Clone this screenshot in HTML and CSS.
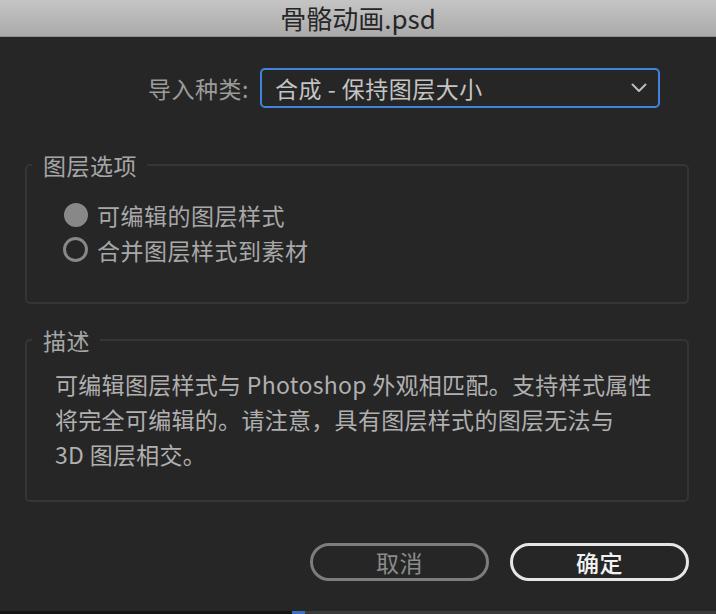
FILE: index.html
```html
<!DOCTYPE html>
<html lang="zh-CN">
<head>
<meta charset="utf-8">
<title>骨骼动画.psd</title>
<link rel="stylesheet" href="styles.css">
</head>
<body>
<div class="window">
  <div class="titlebar">骨骼动画.psd</div>
  <div class="content">
    <div class="import-row">
      <span class="import-label">导入种类:</span>
      <div class="select">
        <span class="select-value">合成 - 保持图层大小</span>
        <svg class="chevron" width="16" height="10" viewBox="0 0 16 10"><path d="M1.5 1.5 L8 8 L14.5 1.5" fill="none" stroke="#bdbdbd" stroke-width="2" stroke-linecap="round" stroke-linejoin="round"/></svg>
      </div>
    </div>

    <fieldset class="group options">
      <legend>图层选项</legend>
      <div class="group-body options-body">
        <div class="radio-row"><span class="radio checked"></span><span class="radio-label">可编辑的图层样式</span></div>
        <div class="radio-row"><span class="radio"></span><span class="radio-label">合并图层样式到素材</span></div>
      </div>
    </fieldset>

    <fieldset class="group desc">
      <legend>描述</legend>
      <div class="group-body desc-body">
        <p class="desc-text">可编辑图层样式与 Photoshop 外观相匹配。支持样式属性<br>将完全可编辑的。请注意，具有图层样式的图层无法与<br>3D 图层相交。</p>
      </div>
    </fieldset>

    <div class="buttons">
      <button class="btn cancel">取消</button>
      <button class="btn ok">确定</button>
    </div>
  </div>
  <div class="bottom-strip"><span class="strip-left"></span><span class="strip-blue"></span><span class="strip-right"></span></div>
</div>
</body>
</html>
```

FILE: styles.css
```css
* { box-sizing: border-box; }
html, body {
  margin: 0;
  padding: 0;
  height: 100%;
  background: #262626;
}
body {
  font-family: "Noto Sans CJK SC", "Noto Sans", sans-serif;
}
.window {
  height: 100vh;
  display: flex;
  flex-direction: column;
  background: #262626;
}
.titlebar {
  height: 37px;
  flex: none;
  background: linear-gradient(#c5c5c5, #aaaaaa);
  border-bottom: 1px solid #8e8e8e;
  color: #262626;
  font-size: 26px;
  line-height: 36px;
  text-align: center;
}
.content {
  padding: 31px 27px 0 25px;
  display: flex;
  flex-direction: column;
}
.import-row {
  display: flex;
  align-items: center;
  justify-content: flex-end;
  gap: 11px;
  padding-right: 29px;
}
.import-label {
  color: #9c9c9c;
  font-size: 23px;
  letter-spacing: 0.5px;
}
.select {
  width: 400px;
  height: 40px;
  border: 2px solid #3f83dc;
  border-radius: 5px;
  display: flex;
  align-items: center;
  justify-content: space-between;
  padding: 0 11px 0 13px;
}
.select-value {
  color: #c4c4c4;
  font-size: 23px;
  letter-spacing: 0.5px;
  line-height: 36px;
}
.chevron { display: block; }

.group {
  margin: 0;
  border: 2px solid #353535;
  border-radius: 5px;
  padding: 0;
  min-width: 0;
}
.group legend {
  margin-left: 5px;
  padding: 0 10px 0 11px;
  color: #a6a6a6;
  font-size: 23px;
  letter-spacing: 0.5px;
  line-height: 30px;
}
.options {
  margin-top: 42px;
}
.options-body {
  padding: 17px 0 35px 36px;
}
.radio-row {
  display: flex;
  align-items: center;
  gap: 9px;
  height: 35px;
}
.radio {
  width: 25px;
  height: 25px;
  border-radius: 50%;
  border: 3px solid #888888;
  flex: none;
}
.radio.checked {
  width: 24px;
  height: 24px;
  margin-left: 1px;
  background: #888888;
  border-color: #888888;
}
.radio-label {
  color: #a8a8a8;
  font-size: 23px;
  letter-spacing: 0.5px;
}
.desc {
  margin-top: 21px;
}
.desc-body {
  padding: 12px 16px 28px 28px;
}
.desc-text {
  margin: 0;
  color: #b0b0b0;
  font-size: 23px;
  letter-spacing: 0.3px;
  line-height: 35px;
  white-space: nowrap;
}
.buttons {
  margin-top: 41px;
  display: flex;
  justify-content: flex-end;
  gap: 21px;
}
.btn {
  width: 179px;
  height: 38px;
  border-radius: 19px;
  background: transparent;
  font-family: "Noto Sans CJK SC", "Noto Sans", sans-serif;
  font-size: 23px;
  letter-spacing: 0.5px;
  line-height: 32px;
  padding: 0;
}
.cancel {
  border: 3px solid #7d7d7d;
  color: #8c8c8c;
}
.ok {
  border: 3px solid #e6e6e6;
  color: #f2f2f2;
  font-weight: 500;
}
.bottom-strip {
  margin-top: auto;
  height: 3px;
  display: flex;
}
.strip-left { width: 292px; background: #141414; }
.strip-blue { width: 13px; background: #3b6fc6; }
.strip-right { flex: 1; background: #3a3a3a; }
```
